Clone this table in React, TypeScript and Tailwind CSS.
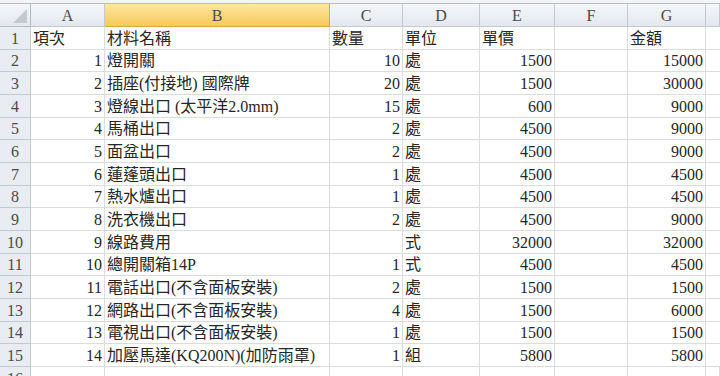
const cols = ["A", "B", "C", "D", "E", "F", "G", ""];

type Row = [string, string, string, string, string, string, string];

const rows: Row[] = [
  ["項次", "材料名稱", "數量", "單位", "單價", "", "金額"],
  ["1", "燈開關", "10", "處", "1500", "", "15000"],
  ["2", "插座(付接地) 國際牌", "20", "處", "1500", "", "30000"],
  ["3", "燈線出口 (太平洋2.0mm)", "15", "處", "600", "", "9000"],
  ["4", "馬桶出口", "2", "處", "4500", "", "9000"],
  ["5", "面盆出口", "2", "處", "4500", "", "9000"],
  ["6", "蓮蓬頭出口", "1", "處", "4500", "", "4500"],
  ["7", "熱水爐出口", "1", "處", "4500", "", "4500"],
  ["8", "洗衣機出口", "2", "處", "4500", "", "9000"],
  ["9", "線路費用", "", "式", "32000", "", "32000"],
  ["10", "總開關箱14P", "1", "式", "4500", "", "4500"],
  ["11", "電話出口(不含面板安裝)", "2", "處", "1500", "", "1500"],
  ["12", "網路出口(不含面板安裝)", "4", "處", "1500", "", "6000"],
  ["13", "電視出口(不含面板安裝)", "1", "處", "1500", "", "1500"],
  ["14", "加壓馬達(KQ200N)(加防雨罩)", "1", "組", "5800", "", "5800"],
];

const gridCols =
  "grid grid-cols-[31px_74px_225px_73px_77px_75px_73px_78px_14px]";

const isNum = (s: string) => /^\d+$/.test(s);

export default function App() {
  return (
    <div
      className="w-[720px] h-[376px] overflow-hidden bg-white text-[16px] text-[#262626] leading-none"
      style={{ fontFamily: '"Liberation Serif", "Noto Sans CJK TC", serif' }}
    >
      {/* formula bar edge */}
      <div className="h-[4px] bg-[#f3f4f6] border-b border-[#b9bdc3]" />

      {/* column headers */}
      <div className={`${gridCols} h-[23px]`}>
        <div className="relative bg-gradient-to-b from-[#f4f6f9] to-[#e4e8ee] border-r border-b border-[#b3bac4]">
          <svg className="absolute right-[3px] bottom-[3px]" width="14" height="14" viewBox="0 0 14 14">
            <polygon points="14,0 14,14 0,14" fill="#c4c9d0" />
          </svg>
        </div>
        {cols.map((c, i) => (
          <div
            key={i}
            className={`flex items-center justify-center pt-[2px] border-r border-b text-[#4a4a4a] ${
              c === "B"
                ? "bg-gradient-to-b from-[#fde7a0] to-[#f7c957] border-[#d9a93f]"
                : "bg-gradient-to-b from-[#f4f6f9] to-[#e4e8ee] border-[#c3c9d1]"
            }`}
          >
            {c}
          </div>
        ))}
      </div>

      {/* data rows */}
      {rows.map((r, ri) => (
        <div key={ri} className={`${gridCols} h-[22.67px]`}>
          <div className="flex items-center justify-center pt-[2px] bg-[#e9edf3] border-r border-b border-[#c3c9d1] text-[#4a4a4a]">
            {ri + 1}
          </div>
          {r.map((cell, ci) => (
            <div
              key={ci}
              className={`flex items-center pt-[2px] whitespace-nowrap border-r border-b border-[#dadcdd] ${
                isNum(cell) ? "justify-end pr-[2px]" : "justify-start pl-[2px]"
              }`}
            >
              {cell}
            </div>
          ))}
          <div className="border-b border-[#dadcdd]" />
        </div>
      ))}

      {/* partial row 16 */}
      <div className={`${gridCols} h-[22.67px]`}>
        <div className="flex items-center justify-center pt-[2px] bg-[#e9edf3] border-r border-[#c3c9d1] text-[#4a4a4a]">
          16
        </div>
        {cols.map((_, i) => (
          <div key={i} className="border-r border-[#dadcdd]" />
        ))}
      </div>
    </div>
  );
}
